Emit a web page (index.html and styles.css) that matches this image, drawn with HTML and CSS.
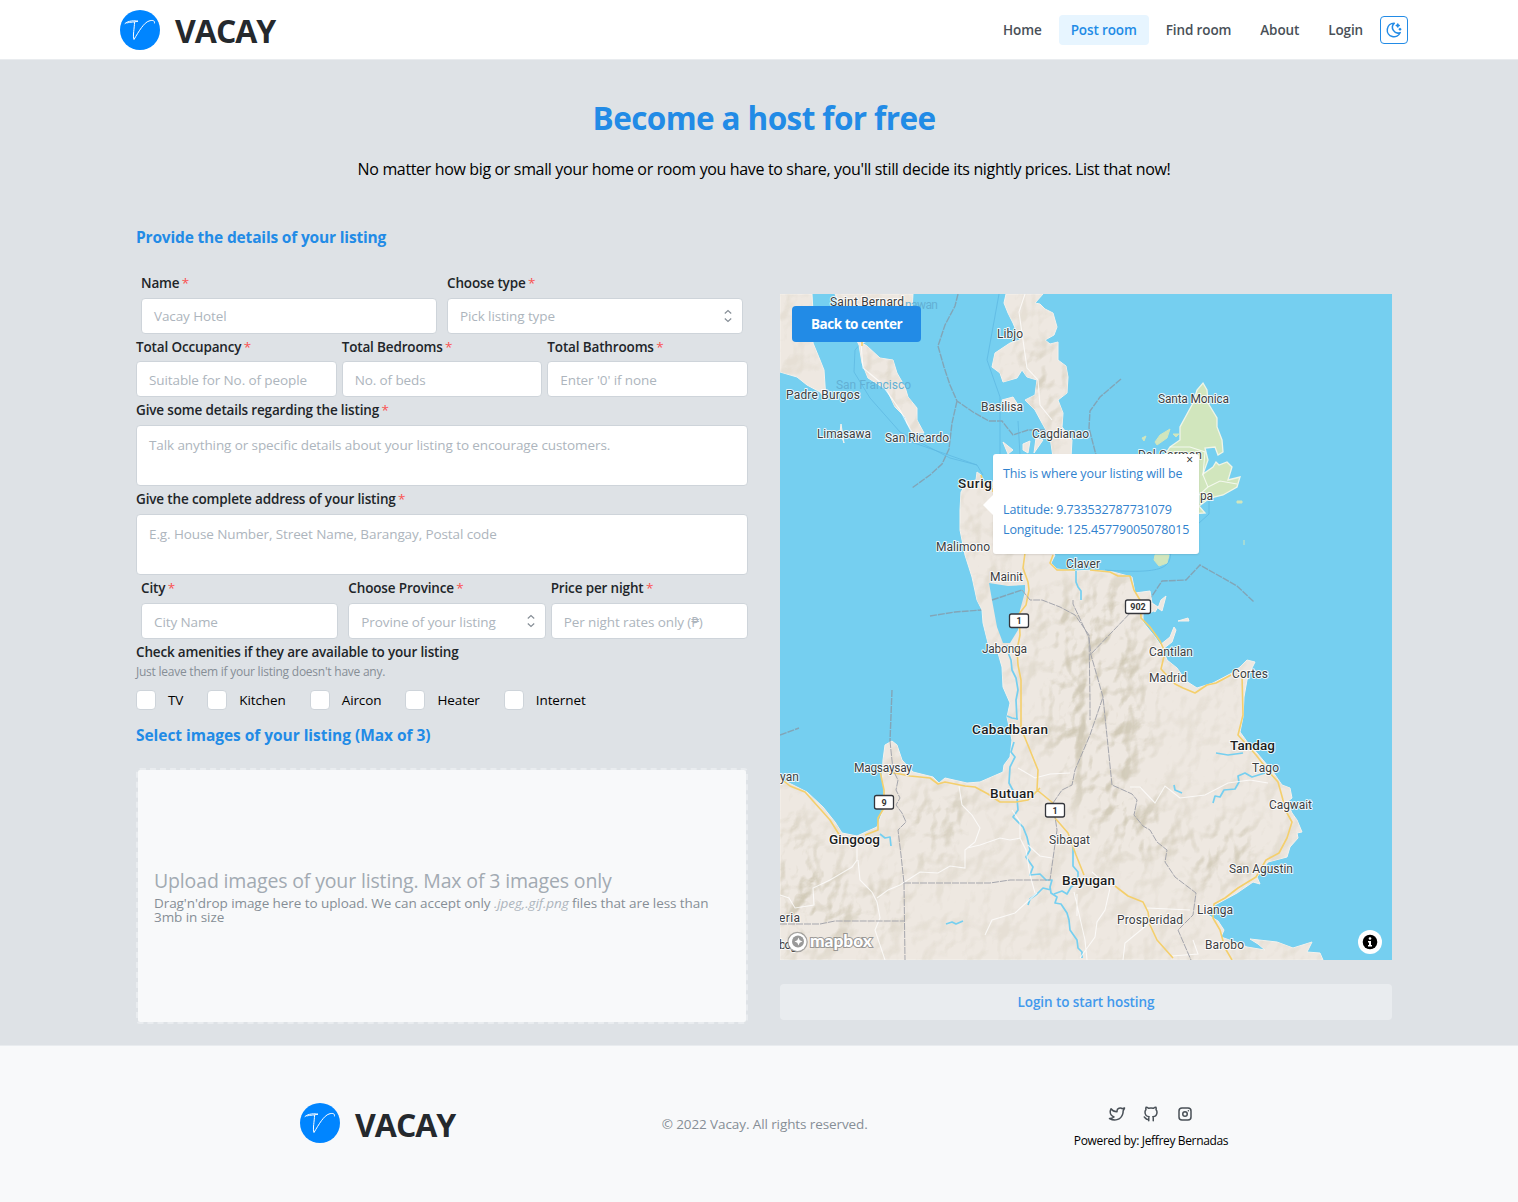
FILE: index.html
```html
<!DOCTYPE html>
<html lang="en">
<head>
<meta charset="utf-8">
<title>Vacay - Post room</title>
<link rel="stylesheet" href="styles.css">
</head>
<body>
<header class="header">
  <div class="header-inner">
    <div class="brand">
      <svg class="brand-mark" viewBox="0 0 40 40"><circle cx="20" cy="20" r="20" fill="#0085ff"/><path d="M5 13.500C8 10.500 15 10.500 18 11.200C13 12.500 8 12 7 13M14.500 12.500C14.500 18 12.500 26 14 29.500C19 21 24 12.500 29 11C32 10 35 10 34.500 13" fill="none" stroke="#fff" stroke-width="1" stroke-linecap="round"/></svg>
      <span class="brand-name">VACAY</span>
    </div>
    <nav class="nav">
      <a class="nav-link">Home</a>
      <a class="nav-link active">Post room</a>
      <a class="nav-link">Find room</a>
      <a class="nav-link">About</a>
      <a class="nav-link">Login</a>
      <button class="theme-btn" aria-label="Toggle theme"><svg class="line-icon" width="18" height="18" viewBox="0 0 24 24"><path d="M12 3c.132 0 .263 0 .393 0a7.500 7.500 0 0 0 7.920 12.446a9 9 0 1 1 -8.313 -12.454z"/><path d="M17 4a2 2 0 0 0 2 2a2 2 0 0 0 -2 2a2 2 0 0 0 -2 -2a2 2 0 0 0 2 -2M19 11h2m-1 -1v2"/></svg></button>
    </nav>
  </div>
</header>

<main class="main">
  <h1 class="title">Become a host for free</h1>
  <p class="subtitle">No matter how big or small your home or room you have to share, you'll still decide its nightly prices. List that now!</p>
  <div class="columns">
    <section class="form">
      <h2 class="section-title details-title">Provide the details of your listing</h2>
      <div class="row two">
        <div class="field"><label>Name <i>*</i></label><div class="input">Vacay Hotel</div></div>
        <div class="field"><label>Choose type <i>*</i></label><div class="input select">Pick listing type<svg class="chevrons" viewBox="0 0 10 14"><path d="M1.800 4.500L5 1.600L8.200 4.500M1.800 9.500L5 12.400L8.200 9.500"/></svg></div></div>
      </div>
      <div class="row three">
        <div class="field"><label>Total Occupancy <i>*</i></label><div class="input">Suitable for No. of people</div></div>
        <div class="field"><label>Total Bedrooms <i>*</i></label><div class="input">No. of beds</div></div>
        <div class="field"><label>Total Bathrooms <i>*</i></label><div class="input">Enter '0' if none</div></div>
      </div>
      <div class="row"><div class="field"><label>Give some details regarding the listing <i>*</i></label><div class="input area">Talk anything or specific details about your listing to encourage customers.</div></div></div>
      <div class="row"><div class="field"><label>Give the complete address of your listing <i>*</i></label><div class="input area">E.g. House Number, Street Name, Barangay, Postal code</div></div></div>
      <div class="row place">
        <div class="field city"><label>City <i>*</i></label><div class="input">City Name</div></div>
        <div class="field"><label>Choose Province <i>*</i></label><div class="input select">Provine of your listing<svg class="chevrons" viewBox="0 0 10 14"><path d="M1.800 4.500L5 1.600L8.200 4.500M1.800 9.500L5 12.400L8.200 9.500"/></svg></div></div>
        <div class="field"><label>Price per night <i>*</i></label><div class="input">Per night rates only (₱)</div></div>
      </div>
      <div class="amenities">
        <label>Check amenities if they are available to your listing</label>
        <p class="hint">Just leave them if your listing doesn't have any.</p>
        <div class="checks">
          <span class="check"><b class="box"></b>TV</span>
          <span class="check"><b class="box"></b>Kitchen</span>
          <span class="check"><b class="box"></b>Aircon</span>
          <span class="check"><b class="box"></b>Heater</span>
          <span class="check"><b class="box"></b>Internet</span>
        </div>
      </div>
      <h2 class="section-title images-title">Select images of your listing (Max of 3)</h2>
      <div class="dropzone">
        <p class="drop-title">Upload images of your listing. Max of 3 images only</p>
        <p class="drop-text">Drag'n'drop image here to upload. We can accept only <em>.jpeg,.gif.png</em> files that are less than<br>3mb in size</p>
      </div>
    </section>

    <section class="side">
      <div class="map">
        <svg class="map-canvas" viewBox="780 294 612 666">
          <defs>
            <clipPath id="land-clip"><use href="#mainland"/><use href="#isle-a"/><use href="#isle-b"/><use href="#dinagat"/></clipPath>
            <filter id="relief" x="0" y="0" width="1" height="1" color-interpolation-filters="sRGB">
              <feTurbulence type="fractalNoise" baseFrequency="0.038 0.03" numOctaves="3" seed="11" result="n"/>
              <feColorMatrix in="n" values="0 0 0 0 0  0 0 0 0 0  0 0 0 0 0  1 0 0 0 0" result="h"/>
              <feDiffuseLighting in="h" surfaceScale="14" lighting-color="#fff" result="lit"><feDistantLight azimuth="225" elevation="50"/></feDiffuseLighting>
              <feColorMatrix in="lit" values="0 0 0 0 0.77  0 0 0 0 0.74  0 0 0 0 0.65  -1.500 0 0 0 1.150"/>
            </filter>
            <filter id="soft" x="-.3" y="-.3" width="1.600" height="1.600"><feGaussianBlur stdDeviation="15"/></filter>
            <mask id="mountains"><rect x="780" y="294" width="612" height="666" fill="#444"/>
              <g fill="#fff" filter="url(#soft)"><path d="M965 480L985 540L1010 705L990 600zM1050 600L1120 580L1150 650L1140 790L1180 830L1130 870L1080 800L1045 730z"/><path d="M780 810L840 870L860 930L780 950zM910 810L960 790L970 830L920 870zM1180 840L1250 820L1260 860L1200 890zM865 350L890 370L910 420z"/><path d="M1035 345L1060 380L1050 430L1015 360zM860 890L900 870L890 940z"/></g></mask>
          </defs>
          <rect x="780" y="294" width="612" height="666" fill="#75cff0"/>
          <g class="boundary">
            <path d="M958 294L955 306L945 325L938 346L944 367L950 385L957 401L973 412L989 421L1002 421L1013 435L1028 430L1050 430L1070 445M957 401L952 423L949 449L942 464L930 475L912 488"/>
            <path d="M1121 379L1100 397L1090 411L1089 428L1096 455M930 616L955 612L981 610L992 600L1022 590M1148 602L1162 581L1186 580L1200 565L1237 586L1254 602M892 690L890 741M780 735L799 728"/>
          </g>
          <g class="ferry"><path d="M862 342L855 350L854 372L870 398L900 432L950 458L977 465L983 475M999 294L987 360L1000 397L1000 455M900 438L940 452L977 465M1105 570C1170 575 1170 565 1171 550M1209 500L1209 514L1198 524M1018 421L1020 455"/></g>
          <g class="land">
            <path id="mainland" d="M977 472L981 475L984 482L1005 482L1030 500L1048 548L1055 555L1051 563L1057 569L1075 571L1093 570L1113 572L1132 577L1135 593L1150 591L1152 603L1157 608L1152 612L1143 611L1143 622L1155 637L1162 647L1167 660L1177 668L1186 681L1197 688L1213 683L1232 673L1240 667L1247 660L1255 662L1252 668L1247 680L1244 697L1243 717L1240 732L1248 743L1257 753L1273 772L1282 785L1290 788L1292 798L1287 802L1292 813L1297 820L1302 832L1297 833L1298 838L1290 847L1287 857L1268 862L1257 877L1260 884L1253 882L1237 893L1215 905L1208 915L1218 921L1224 930L1221 937L1235 942L1247 947L1265 950L1258 944L1250 939L1277 942L1293 948L1312 942L1307 952L1320 953L1323 960L780 960V778L783 780L807 792L823 807L835 822L842 833L857 836L868 831L877 827L883 810L884 790L882 777L883 760L885 745L892 741L897 745L902 760L913 772L933 777L939 783L945 778L967 783L980 782L1003 772L1004 765L1010 757L1012 740L1007 717L1010 703L1003 687L1002 667L998 653L988 643L983 623L982 610L977 600L972 577L965 555L960 530L960 510L961 492L967 482L976 480Z"/>
            <path id="isle-a" d="M780 294H812L814 330L813 343L820 360L824 370L826 400L820 392L807 385L797 377L780 372Z"/>
            <path id="isle-b" d="M835 294H913L911 325L862 343L867 346L880 358L893 360L897 373L905 387L908 397L917 408L917 420L924 433L913 433L907 423L905 417L895 407L887 390L868 378L862 363L859 345Z"/>
            <path id="dinagat" d="M1006 294H1043L1035 303L1040 304L1045 309L1053 313L1057 327L1054 335L1045 340L1050 344L1058 342L1058 360L1066 366L1068 377L1067 393L1058 400L1063 413L1062 427L1072 440L1071 458L1053 457L1050 437L1042 423L1035 410L1025 400L1035 395L1037 380L1027 377L1022 370L1017 378L1003 382L1000 373L992 367L995 353L1010 343L1020 340L1013 323L1008 313L1004 303Z"/>
            <path d="M841 424L844 443L840 432ZM1002 400L1013 397L1020 408L1008 412ZM1003 442L1013 450L1008 454ZM1023 444L1030 441L1028 453L1023 450ZM1036 438L1043 440L1034 453ZM1160 645L1170 637L1174 627L1176 630L1172 642L1163 649ZM1178 621L1188 618L1189 621ZM1152 603L1158 607L1155 612L1148 607ZM1161 600L1166 596L1162 611L1158 608Z"/>
          </g>
          <path class="park" d="M1203 383L1207 390L1208 403L1217 418L1217 427L1222 440L1223 452L1218 455L1215 447L1205 448L1208 460L1203 474L1213 467L1216 462L1219 465L1227 462L1232 467L1228 480L1240 477L1237 487L1223 495L1210 498L1199 506L1205 513L1190 514L1165 480L1160 462L1170 447L1180 440L1180 427L1193 403L1197 390Z"/>
          <path class="islet" d="M1155 442L1160 435L1170 429L1167 438L1157 445ZM1142 438L1146 436L1144 441ZM1173 434L1179 434L1176 437ZM1155 555H1169L1167 563L1159 566L1154 560ZM1237 501H1242V503H1237ZM1244 540V545"/>
          <g clip-path="url(#land-clip)"><g mask="url(#mountains)"><rect x="780" y="294" width="612" height="666" filter="url(#relief)" opacity=".7"/></g></g>
          <path class="water" d="M989 583L1008 586L1025 585L1025 592L1020 610L1018 630L1010 643L1003 643L997 627L992 600Z"/>
          <path class="lake-border" d="M992 600L1022 590"/>
          <g class="river">
            <path d="M1007 645L1009 655L1011 660L1012 670L1016 678L1018 690L1016 700L1017 720M1007 716L1012 718L1018 719M1014 742L1011 752L1015 757L1010 767L1009 783L1017 798L1018 810L1013 817L1023 827L1027 837L1030 850L1026 857L1033 867L1030 875L1040 874L1046 880L1052 880L1050 887L1051 893L1057 897L1055 903L1061 904L1067 913L1069 920L1070 930L1077 940L1078 948L1082 952L1082 958M1051 890L1043 888L1037 894L1030 899L1028 905M1054 894L1062 891L1067 894L1071 887L1075 884M1073 845L1073 866L1078 872L1078 879M880 834L885 838L890 837L891 846M946 924L952 922L956 924L963 921M1076 571L1076 582L1078 587L1081 591L1081 600M1213 803L1215 796L1220 797L1224 790L1235 789L1239 782L1238 776L1245 773L1252 777L1268 772M1216 753L1228 755L1243 753M1174 785L1175 790L1182 793"/>
          </g>
          <g class="minor">
            <path d="M1025 294L1019 312L1023 340L1027 368L1038 380L1040 405L1052 420M861 343L863 368L880 382L900 410L912 433M857 840L857 860L852 867L830 880L813 888L814 905L795 908L789 898L780 895M858 860L860 880L872 892L877 902L880 918L875 930L880 945L885 960M959 786L962 805L972 815L980 828L975 842L965 850L965 868L950 866L938 873L920 872L900 885L888 890L877 898M1012 810L1020 822L1020 838L1026 850L1030 875L1035 893M1021 838L1010 840L1000 838L980 845L967 848M1018 768L1035 778L1050 774L1070 773M1028 845L1040 856L1052 858M1074 892L1085 940L1087 960M1077 894L1077 916M1147 908L1190 910M1147 925L1125 943L1123 960M1130 787L1140 787L1155 803L1165 786L1180 798L1205 795L1228 783L1250 780L1268 783M1193 940L1198 954L1172 956M1037 893L1015 913L992 920L985 935M1092 872L1110 888L1105 910L1097 922L1095 937L1080 958M1170 447L1190 447L1205 452L1203 475L1208 487L1199 495M1208 487L1220 481L1237 484"/>
          </g>
          <g class="road">
            <path d="M1025 553L1023 568L1028 582L1029 590L1026 605L1019 614L1020 635L1017 650L1018 665L1021 680L1021 728L1038 770L1037 790L1053 803L1055 818L1068 833L1076 855L1084 875M1040 788L1028 800L1016 802L1000 802L988 794L975 787L965 786L945 782L938 784L930 778L910 776L900 774L880 771L884 790L884 808L878 818L878 830L865 835M780 778L790 786L805 792L822 811L830 820L840 836M1053 555L1050 563L1057 570L1075 570M1090 570L1110 572L1118 576L1130 576L1134 590L1140 600L1141 618L1150 627L1160 641L1165 652L1161 669L1175 684L1183 688L1195 693L1207 685L1216 683L1231 675M1242 675L1243 715L1238 735L1256 755L1270 773L1278 782L1283 800L1287 813L1292 822L1287 838L1279 853L1266 860L1256 877L1238 888L1225 898L1214 904L1213 918L1220 930L1225 948L1232 960M1115 886L1128 896L1143 902L1148 912L1150 925L1157 940L1173 958M862 338V346M981 475L985 490M993 482V492"/>
          </g>
          <g class="border">
            <path d="M890 741L893 770L898 780L896 790L900 798L896 805L902 813L906 822L898 830L901 855L904 883L905 960M904 883L990 883L1010 880L1050 880L1057 830L1053 803L1062 790L1072 785L1075 770L1090 735L1103 697M1022 590L1030 600L1042 600L1060 607L1075 615L1089 635L1090 700L1090 720M1073 600V604L1089 638L1091 655L1103 697L1112 785L1132 794L1137 800L1134 815L1143 826L1150 830L1157 842L1167 850L1165 862L1175 877L1196 893L1193 915L1178 930L1191 960M1135 608L1090 655M780 924L820 924L835 921H904"/>
          </g>
          <g class="labels">
            <text x="830" y="306" textLength="74">Saint Bernard</text><text x="997" y="338" textLength="26">Libjo</text>
            <text x="786" y="399" textLength="74">Padre Burgos</text><text class="dim" x="836" y="389" textLength="75">San Francisco</text><text class="dim" x="905" y="309" textLength="33">nawan</text>
            <text x="817" y="438" textLength="54">Limasawa</text><text x="885" y="442" textLength="64">San Ricardo</text><text x="981" y="411" textLength="42">Basilisa</text><text x="1032" y="438" textLength="57">Cagdianao</text>
            <text x="1158" y="403" textLength="71">Santa Monica</text><text x="1138" y="459" textLength="64">Del Carmen</text><text x="1200" y="500" textLength="13">pa</text>
            <text class="big" x="958" y="488" textLength="50">Surigao</text><text x="936" y="551" textLength="54">Malimono</text><text x="990" y="581" textLength="33">Mainit</text><text x="1066" y="568" textLength="34">Claver</text>
            <text x="982" y="653" textLength="45">Jabonga</text><text x="1149" y="656" textLength="44">Cantilan</text><text x="1149" y="682" textLength="38">Madrid</text><text x="1232" y="678" textLength="36">Cortes</text>
            <text class="big" x="972" y="734" textLength="76">Cabadbaran</text><text class="big" x="1230" y="750" textLength="45">Tandag</text><text x="1252" y="772" textLength="27">Tago</text>
            <text x="854" y="772" textLength="58">Magsaysay</text><text x="780" y="781" textLength="19">yan</text><text class="big" x="990" y="798" textLength="44">Butuan</text><text class="big" x="829" y="844" textLength="51">Gingoog</text>
            <text x="1049" y="844" textLength="41">Sibagat</text><text x="1269" y="809" textLength="43">Cagwait</text><text x="1229" y="873" textLength="64">San Agustin</text><text class="big" x="1062" y="885" textLength="53">Bayugan</text>
            <text x="1117" y="924" textLength="66">Prosperidad</text><text x="1197" y="914" textLength="36">Lianga</text><text x="1205" y="949" textLength="39">Barobo</text><text x="779" y="922" textLength="21">eria</text><text x="779" y="949" textLength="18">bog</text>
          </g>
          <g class="shields">
            <rect x="1009.500" y="614" width="19" height="13.500" rx="2"/><text x="1019" y="624">1</text>
            <rect x="1125.500" y="600" width="25" height="13.500" rx="2"/><text x="1138" y="610">902</text>
            <rect x="874.500" y="795.500" width="19" height="13.500" rx="2"/><text x="884" y="805.500">9</text>
            <rect x="1045.500" y="803.500" width="19" height="13.500" rx="2"/><text x="1055" y="813.500">1</text>
          </g>
          <g class="mapbox">
            <circle cx="797.500" cy="942" r="9" fill="#fff" stroke="#777" stroke-opacity=".6" stroke-width="2.500"/><circle cx="797.500" cy="942" r="9" fill="#fff"/><circle cx="798" cy="941.500" r="6" fill="#999"/><path d="M798.500 937.500L799.700 940.300L802.500 941.500L799.700 942.700L798.500 945.500L797.300 942.700L794.500 941.500L797.300 940.300Z" fill="#fff"/><text x="810" y="947" textLength="62" lengthAdjust="spacingAndGlyphs">mapbox</text>
          </g>
          <circle cx="1370" cy="942" r="12" fill="#fff"/><circle cx="1370" cy="942" r="7.300"/><circle cx="1370" cy="938.500" r="1.300" fill="#fff"/><path d="M1368 941H1371V945H1372V946.500H1368V945H1369V942.500H1368Z" fill="#fff"/>
        </svg>
        <button class="center-btn">Back to center</button>
        <div class="popup"><span class="popup-close">×</span><p class="popup-title">This is where your listing will be</p><p>Latitude: 9.733532787731079</p><p>Longitude: 125.45779005078015</p></div>
      </div>
      <button class="submit">Login to start hosting</button>
    </section>
  </div>
</main>

<footer class="footer">
  <div class="brand">
    <svg class="brand-mark" viewBox="0 0 40 40"><circle cx="20" cy="20" r="20" fill="#0085ff"/><path d="M5 13.500C8 10.500 15 10.500 18 11.200C13 12.500 8 12 7 13M14.500 12.500C14.500 18 12.500 26 14 29.500C19 21 24 12.500 29 11C32 10 35 10 34.500 13" fill="none" stroke="#fff" stroke-width="1" stroke-linecap="round"/></svg>
    <span class="brand-name">VACAY</span>
  </div>
  <p class="copyright">© 2022 Vacay. All rights reserved.</p>
  <div class="credits">
    <div class="socials">
      <svg class="line-icon" width="18" height="18" viewBox="0 0 24 24"><path d="M22 4.010c-1 .49 -1.980 .689 -3 .99c-1.121 -1.265 -2.783 -1.335 -4.380 -.737s-2.643 2.060 -2.620 3.737v1c-3.245 .083 -6.135 -1.395 -8 -4c0 0 -4.182 7.433 4 11c-1.872 1.247 -3.739 2.088 -6 2c3.308 1.803 6.913 2.423 10.034 1.517c3.580 -1.040 6.522 -3.723 7.651 -7.742a13.840 13.840 0 0 0 .497 -3.753c0 -.249 1.510 -2.772 1.818 -4.013z"/></svg>
      <svg class="line-icon" width="18" height="18" viewBox="0 0 24 24"><path d="M9 19c-4.300 1.400 -4.300 -2.500 -6 -3m12 5v-3.500c0 -1 .1 -1.400 -.5 -2c2.800 -.3 5.500 -1.400 5.500 -6a4.600 4.600 0 0 0 -1.300 -3.200a4.200 4.200 0 0 0 -.1 -3.200s-1.100 -.3 -3.500 1.300a12.300 12.300 0 0 0 -6.200 0c-2.400 -1.600 -3.500 -1.300 -3.500 -1.300a4.200 4.200 0 0 0 -.1 3.200a4.600 4.600 0 0 0 -1.300 3.200c0 4.600 2.700 5.700 5.500 6c-.6 .6 -.6 1.200 -.5 2v3.500"/></svg>
      <svg class="line-icon" width="18" height="18" viewBox="0 0 24 24"><rect x="4" y="4" width="16" height="16" rx="4"/><circle cx="12" cy="12" r="3"/><path d="M16.500 7.500v.001"/></svg>
    </div>
    <p class="powered">Powered by: Jeffrey Bernadas</p>
  </div>
</footer>
</body>
</html>
```
FILE: styles.css
```css
* { box-sizing: border-box; }
body { margin: 0; background: #dee2e6; color: #000; font-family: "Open Sans", "Noto Sans", sans-serif; font-size: 14px; }
h1, h2, p { margin: 0; }
button { font: inherit; border: 0; padding: 0; }

.header { height: 60px; background: #fff; border-bottom: 1px solid #e9ecef; }
.header-inner { width: 1288px; height: 59px; margin-left: 120px; display: flex; align-items: center; justify-content: space-between; }
.brand { display: flex; align-items: center; gap: 15px; }
.brand-mark { width: 40px; height: 40px; display: block; }
.brand-name { font-size: 32px; font-weight: 700; line-height: 40px; color: #25292d; letter-spacing: -1px; padding-top: 3px; }
.nav { display: flex; align-items: center; gap: 5px; }
.nav-link { height: 30px; line-height: 30px; padding: 0 12px; border-radius: 4px; color: #495057; font-weight: 600; font-size: 13.5px; letter-spacing: -0.12px; }
.nav-link.active { background: #e7f5ff; color: #228be6; }
.line-icon { display: block; fill: none; stroke: currentColor; stroke-width: 2; stroke-linecap: round; stroke-linejoin: round; }
.theme-btn { width: 28px; height: 28px; display: grid; place-items: center; color: #228be6; border: 1px solid #228be6; border-radius: 4px; background: #fff; }

.main { height: 985px; padding: 35px 0 0 136px; }
.title { width: 1256px; text-align: center; font-size: 31.5px; line-height: 46px; color: #228be6; letter-spacing: -0.6px; }
.subtitle { width: 1256px; text-align: center; font-size: 16px; line-height: 24px; margin-top: 16px; letter-spacing: -0.35px; }
.columns { display: flex; gap: 32px; margin-top: 44px; }
.form { width: 612px; }
.section-title { font-size: 15.5px; line-height: 24px; font-weight: 700; color: #228be6; letter-spacing: -0.04px; }
.details-title { margin-bottom: 23px; letter-spacing: -0.17px; }
.row { display: grid; gap: 5px; margin-bottom: 2px; }
.two { grid-template-columns: 1fr 1fr; gap: 10px; padding: 0 5px; margin-bottom: 1px; }
.three { grid-template-columns: repeat(3, 1fr); }
.three label { padding-top: 1px; }
.three .input, .place .input { line-height: 37px; }
.place { display: flex; gap: 5px; padding-left: 5px; }
.place .field { flex: 1; min-width: 0; }
.place .city { margin-right: 5px; }
label { display: block; height: 22px; line-height: 22px; margin-bottom: 4px; color: #212529; font-weight: 600; font-size: 13.5px; letter-spacing: -0.15px; white-space: nowrap; }
label i { font-style: normal; font-weight: 400; color: #fa5252; margin-left: -1px; }
.input { position: relative; height: 36px; padding: 0 12px; line-height: 35px; background: #fff; border: 1px solid #ced4da; border-radius: 4px; color: #adb5bd; font-size: 13.5px; letter-spacing: -0.1px; white-space: nowrap; }
.select { display: flex; justify-content: space-between; padding-right: 9px; }
.chevrons { width: 10px; height: 14px; margin-top: 10px; fill: none; stroke: #868e96; stroke-width: 1.2; }
.input.area { height: 61px; padding-top: 9px; line-height: 21px; }
.amenities label { margin: 0; letter-spacing: -0.17px; }
.hint { font-size: 12px; line-height: 18px; color: #868e96; letter-spacing: -0.24px; }
.checks { display: flex; gap: 24px; margin-top: 9px; height: 20px; }
.check { display: flex; gap: 12px; align-items: center; line-height: 20px; font-size: 13.5px; letter-spacing: -0.1px; }
.box { width: 20px; height: 20px; background: #fff; border: 1px solid #ced4da; border-radius: 4px; }
.images-title { margin-top: 13px; }
.dropzone { height: 256px; margin-top: 21px; padding: 0 16px 1px; border: 2px dashed #e9ecef; border-radius: 4px; background: #f8f9fa; background-clip: padding-box; color: #868e96; display: flex; flex-direction: column; justify-content: center; }
.drop-title { font-size: 19.5px; line-height: 26px; color: #a2aab2; letter-spacing: -0.15px; }
.drop-text { font-size: 13.5px; line-height: 14px; margin-top: 2px; letter-spacing: -0.07px; white-space: nowrap; }
.drop-text em { color: #adb5bd; }

.side { width: 612px; padding-top: 69px; }
.map { position: relative; width: 612px; height: 666px; overflow: hidden; }
.map-canvas { display: block; width: 612px; height: 666px; }
.land path { fill: #eee8e1; stroke: #f5f2ed; stroke-width: 1; }
.park { fill: #d1e6bd; stroke: #f0f5e8; stroke-width: 1.3; }
.islet { fill: #d1e6bd; stroke: #d1e6bd; }
.water { fill: #75cff0; }
.river path { fill: none; stroke: #75cff0; stroke-width: 1.7; stroke-linejoin: round; }
.minor path { fill: none; stroke: #fff; stroke-opacity: .75; stroke-width: 1.1; }
.road path { fill: none; stroke: #f4cf6c; stroke-width: 1.6; stroke-linejoin: round; }
.border path { fill: none; stroke: #a5a6ad; stroke-width: 1; stroke-dasharray: 7 1; }
.boundary path, .lake-border { fill: none; stroke: #82a5b7; stroke-width: 1.4; stroke-dasharray: 7 1; }
.ferry path { fill: none; stroke: #5eb9e2; stroke-width: .8; }
.labels text { font: 400 12px Roboto, sans-serif; fill: #3c3e42; stroke: #fff; stroke-opacity: .85; stroke-width: 2px; stroke-linejoin: round; paint-order: stroke; }
.labels .big { font-weight: 500; font-size: 13.5px; fill: #1c1e22; }
.labels .dim { font-weight: 400; fill: #63b0d4; stroke: none; }
.shields rect { fill: #fff; stroke: #34363c; stroke-width: 1.3; }
.shields text { font: 700 9px Roboto, sans-serif; text-anchor: middle; fill: #333; }
.mapbox text { font: 900 16px Lato, sans-serif; fill: #fff; stroke: #777; stroke-opacity: .7; stroke-width: 2px; paint-order: stroke; }
.center-btn { position: absolute; left: 12px; top: 12px; width: 129px; height: 36px; border-radius: 4px; background: #228be6; color: #fff; font-weight: 700; font-size: 13.5px; letter-spacing: -0.45px; }
.popup { position: absolute; left: 213px; top: 160px; width: 206px; height: 100px; padding: 10px; background: #fff; border-radius: 3px; box-shadow: 0 1px 2px rgba(0, 0, 0, .1); color: #3182ce; font-size: 12.5px; line-height: 20px; white-space: nowrap; }
.popup-title { margin-bottom: 16px; }
.popup::before { content: ""; position: absolute; left: -10px; top: 41px; border: 10px solid transparent; border-right-color: #fff; border-left: 0; }
.popup p { letter-spacing: -0.12px; }
.popup-close { position: absolute; right: 6px; top: 0; line-height: 12px; color: #222; font-size: 12px; }
.submit { display: block; width: 612px; height: 36px; margin-top: 24px; border-radius: 4px; background: #e9ecef; color: #4299ec; font-weight: 600; font-size: 13.5px; letter-spacing: -0.1px; }

.footer { height: 157px; background: #f8f9fa; border-top: 1px solid #e9ecef; padding: 0 290px 2px 300px; display: flex; align-items: center; justify-content: space-between; }
.copyright { font-size: 13.5px; line-height: 20px; color: #868e96; letter-spacing: -0.1px; padding-top: 2px; }
.credits { width: 154px; display: flex; flex-direction: column; align-items: center; gap: 9px; padding-top: 9px; }
.socials { display: flex; gap: 16px; color: #495057; }
.powered { font-size: 12px; line-height: 18px; letter-spacing: -0.35px; white-space: nowrap; }
```
